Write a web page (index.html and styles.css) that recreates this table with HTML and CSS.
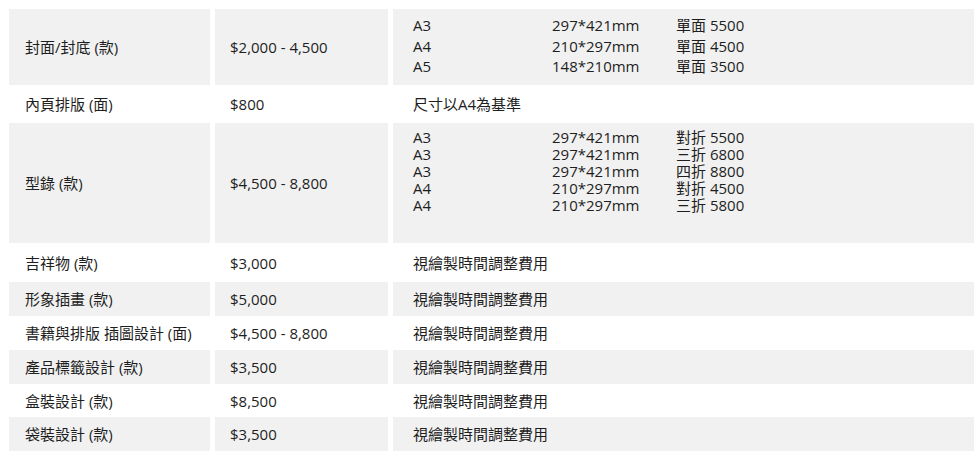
FILE: index.html
```html
<!DOCTYPE html>
<html lang="zh-Hant">
<head>
<meta charset="utf-8">
<title>設計價目表</title>
<link rel="stylesheet" href="styles.css">
</head>
<body>
<div class="price-table">
  <div class="cell name shade">封面/封底 (款)</div>
  <div class="cell price shade">$2,000 - 4,500</div>
  <div class="cell note shade spec spec-wide">
    <span>A3</span><span>297*421mm</span><span>單面 5500</span>
    <span>A4</span><span>210*297mm</span><span>單面 4500</span>
    <span>A5</span><span>148*210mm</span><span>單面 3500</span>
  </div>

  <div class="cell name">內頁排版 (面)</div>
  <div class="cell price">$800</div>
  <div class="cell note">尺寸以A4為基準</div>

  <div class="cell name shade">型錄 (款)</div>
  <div class="cell price shade">$4,500 - 8,800</div>
  <div class="cell note shade spec spec-tight">
    <span>A3</span><span>297*421mm</span><span>對折 5500</span>
    <span>A3</span><span>297*421mm</span><span>三折 6800</span>
    <span>A3</span><span>297*421mm</span><span>四折 8800</span>
    <span>A4</span><span>210*297mm</span><span>對折 4500</span>
    <span>A4</span><span>210*297mm</span><span>三折 5800</span>
  </div>

  <div class="cell name">吉祥物 (款)</div>
  <div class="cell price">$3,000</div>
  <div class="cell note">視繪製時間調整費用</div>

  <div class="cell name shade">形象插畫 (款)</div>
  <div class="cell price shade">$5,000</div>
  <div class="cell note shade">視繪製時間調整費用</div>

  <div class="cell name">書籍與排版 插圖設計 (面)</div>
  <div class="cell price">$4,500 - 8,800</div>
  <div class="cell note">視繪製時間調整費用</div>

  <div class="cell name shade">產品標籤設計 (款)</div>
  <div class="cell price shade">$3,500</div>
  <div class="cell note shade">視繪製時間調整費用</div>

  <div class="cell name">盒裝設計 (款)</div>
  <div class="cell price">$8,500</div>
  <div class="cell note">視繪製時間調整費用</div>

  <div class="cell name shade">袋裝設計 (款)</div>
  <div class="cell price shade">$3,500</div>
  <div class="cell note shade">視繪製時間調整費用</div>
</div>
</body>
</html>
```

FILE: styles.css
```css
html, body {
  margin: 0;
  padding: 0;
  background: #ffffff;
}

body {
  font-family: "Open Sans", "Noto Sans CJK TC", sans-serif;
  font-size: 15px;
  color: #1e1e1e;
}

.price-table {
  display: grid;
  grid-template-columns: 201px 173px 581px;
  grid-template-rows: 76px 38px 120px 39px 34px 34px 34px 33px 34px;
  column-gap: 5px;
  margin: 9px 0 0 9px;
}

.cell {
  display: flex;
  align-items: center;
  line-height: 20px;
  white-space: nowrap;
}

.shade {
  background: #f1f1f1;
}

.name {
  padding-left: 16px;
}

.price {
  padding-left: 15px;
}

.note {
  padding-left: 20px;
}

.spec {
  display: grid;
  grid-template-columns: 139px 124px auto;
  align-content: start;
  justify-content: start;
}

.spec-wide {
  padding-top: 6px;
  line-height: 20.5px;
}

.spec-tight {
  padding-top: 6px;
  line-height: 17px;
}
```
